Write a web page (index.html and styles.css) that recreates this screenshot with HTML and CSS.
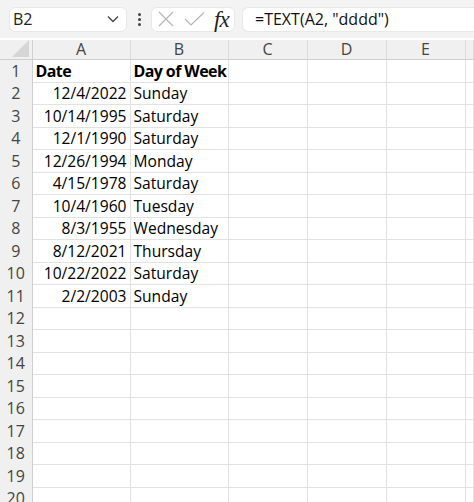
FILE: index.html
```html
<!DOCTYPE html>
<html lang="en">
<head>
  <meta charset="UTF-8" />
  <title>Day of Week</title>
  <link rel="stylesheet" href="styles.css">
</head>
<body>

  <div class="toolbar">
    <div class="name-box">
      <span>B2</span>
      <svg class="chevron" width="12" height="8" viewBox="0 0 12 8"><path d="M1 1.5 L6 6.5 L11 1.5" fill="none" stroke="#444" stroke-width="1.3"/></svg>
    </div>
    <div class="dots"><i></i><i></i><i></i></div>
    <div class="fx-box">
      <svg width="16" height="16" viewBox="0 0 16 16"><path d="M1 1 L15 15 M15 1 L1 15" stroke="#b5b5b5" stroke-width="1.2"/></svg>
      <svg width="21" height="16" viewBox="0 0 21 16"><path d="M1 8 L7 14 L20 1.5" fill="none" stroke="#b5b5b5" stroke-width="1.2"/></svg>
      <span class="fx">fx</span>
    </div>
    <div class="formula">=TEXT(A2, "dddd")</div>
  </div>

  <table class="sheet">
    <colgroup>
      <col class="c-row"><col class="c-ab"><col class="c-ab"><col class="c-cd"><col class="c-cd"><col class="c-cd"><col>
    </colgroup>
    <thead>
      <tr>
        <th class="corner"><span class="tri"></span></th>
        <th>A</th><th>B</th><th>C</th><th>D</th><th>E</th><th></th>
      </tr>
    </thead>
    <tbody id="rows"></tbody>
  </table>

  <script>
    const data = [
      ["Date", "Day of Week"],
      ["12/4/2022", "Sunday"],
      ["10/14/1995", "Saturday"],
      ["12/1/1990", "Saturday"],
      ["12/26/1994", "Monday"],
      ["4/15/1978", "Saturday"],
      ["10/4/1960", "Tuesday"],
      ["8/3/1955", "Wednesday"],
      ["8/12/2021", "Thursday"],
      ["10/22/2022", "Saturday"],
      ["2/2/2003", "Sunday"]
    ];

    const tbody = document.getElementById("rows");
    for (let i = 1; i <= 20; i++) {
      const row = data[i - 1] || ["", ""];
      const tr = document.createElement("tr");
      let html = '<th>' + i + '</th>';
      if (i === 1) {
        html += '<td class="bold">' + row[0] + '</td><td class="bold">' + row[1] + '</td>';
      } else {
        html += '<td class="num">' + row[0] + '</td><td>' + row[1] + '</td>';
      }
      html += '<td></td><td></td><td></td><td></td>';
      tr.innerHTML = html;
      tbody.appendChild(tr);
    }
  </script>

</body>
</html>
```

FILE: styles.css
```css
body {
  margin: 0;
  font-family: 'Open Sans', 'Noto Sans', sans-serif;
  background: #ffffff;
  color: #000;
  width: 474px;
  height: 502px;
  overflow: hidden;
}

.toolbar {
  display: flex;
  align-items: center;
  height: 38px;
  background: #f3f3f3;
  padding: 0 0 0 9px;
}

.name-box {
  width: 118px;
  height: 25px;
  box-sizing: border-box;
  background: #fff;
  border: 1px solid #e8e8e8;
  border-radius: 6px;
  display: flex;
  align-items: center;
  justify-content: space-between;
  padding: 0 7px 0 3px;
  font-size: 16px;
  color: #222;
}

.dots {
  width: 24px;
  display: flex;
  flex-direction: column;
  align-items: center;
  gap: 2px;
}

.dots i {
  width: 3px;
  height: 3px;
  border-radius: 50%;
  background: #444;
}

.fx-box {
  width: 84px;
  height: 25px;
  box-sizing: border-box;
  background: #fff;
  border: 1px solid #e8e8e8;
  border-radius: 6px;
  display: flex;
  align-items: center;
  gap: 10px;
  padding: 0 0 0 6px;
}

.fx {
  font-family: 'Liberation Serif', serif;
  font-style: italic;
  font-size: 23px;
  line-height: 23px;
  color: #222;
  margin-left: -1px;
  letter-spacing: -1px;
}

.formula {
  flex: 1;
  margin-left: 7px;
  height: 25px;
  box-sizing: border-box;
  background: #fff;
  border: 1px solid #e8e8e8;
  border-right: none;
  border-radius: 6px 0 0 6px;
  padding: 0 0 0 12px;
  display: flex;
  align-items: center;
  font-size: 16px;
  color: #111;
}

.sheet {
  border-collapse: collapse;
  table-layout: fixed;
  width: 474px;
  margin-top: 2px;
  font-size: 15.6px;
}

.c-row { width: 32px; }
.c-ab { width: 98px; }
.c-cd { width: 79px; }

.sheet thead th {
  height: 19px;
  background: #f0f0f0;
  border-bottom: 1px solid #cfcfcf;
  border-right: 1px solid #dcdcdc;
  font-weight: normal;
  color: #444;
  font-size: 16px;
  padding: 0;
  line-height: 19px;
}

.sheet thead th.corner {
  position: relative;
  border-right: 1px solid #cfcfcf;
}

.tri {
  position: absolute;
  right: 3px;
  bottom: 2px;
  width: 0;
  height: 0;
  border-left: 17px solid transparent;
  border-bottom: 17px solid #d6d6d6;
}

.sheet tbody th {
  height: 21.5px;
  background: #f0f0f0;
  border-right: 1px solid #cfcfcf;
  font-weight: normal;
  color: #444;
  padding: 0;
  text-align: center;
  font-size: 16px;
  line-height: 20px;
}

.sheet td {
  height: 21.5px;
  border-right: 1px solid #e2e2e2;
  border-bottom: 1px solid #e2e2e2;
  padding: 0 3px;
  white-space: nowrap;
  overflow: hidden;
  line-height: 20px;
}

.sheet td.num {
  text-align: right;
}

.sheet td.bold {
  font-weight: bold;
  font-size: 16px;
  letter-spacing: -0.6px;
}
```
